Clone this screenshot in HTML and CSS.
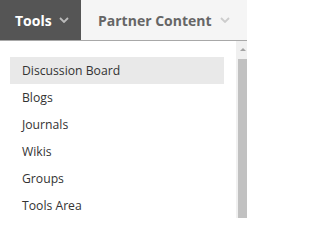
FILE: index.html
```html
<!DOCTYPE html>
<html>
<head>
<meta charset="utf-8">
<link rel="stylesheet" href="styles.css">
</head>
<body>
<div class="header">
  <div class="tab tab-active">Tools <svg class="chev" width="10" height="6" viewBox="0 0 10 6"><path d="M1 1 L5 5 L9 1" fill="none" stroke="currentColor" stroke-width="1.8"/></svg></div>
  <div class="tab tab-plain">Partner Content <svg class="chev" width="10" height="6" viewBox="0 0 10 6"><path d="M1 1 L5 5 L9 1" fill="none" stroke="currentColor" stroke-width="1.8"/></svg></div>
</div>
<div class="body">
  <ul class="menu">
    <li class="item item-hover">Discussion Board</li>
    <li class="item">Blogs</li>
    <li class="item">Journals</li>
    <li class="item">Wikis</li>
    <li class="item">Groups</li>
    <li class="item">Tools Area</li>
  </ul>
  <div class="scroll">
    <div class="arrow"></div>
    <div class="thumb"></div>
  </div>
</div>
</body>
</html>
```
FILE: styles.css
```css
html, body { margin: 0; padding: 0; }
body {
  width: 247px;
  height: 218px;
  overflow: hidden;
  background: #fff;
  font-family: "Open Sans", sans-serif;
}
.header {
  display: flex;
  height: 40px;
  background: #f5f5f5;
  border-bottom: 1px solid #a8a8a8;
}
.tab {
  display: flex;
  align-items: center;
  font-weight: 700;
  font-size: 14px;
}
.tab-active {
  width: 81px;
  box-sizing: border-box;
  padding-left: 15px;
  background: #555;
  color: #fff;
}
.tab-active .chev { color: #bbb; margin-left: 7px; }
.tab-plain {
  padding-left: 17px;
  color: #666;
}
.tab-plain .chev { color: #ccc; margin-left: 8px; }
.body {
  display: flex;
  height: 177px;
}
.menu {
  list-style: none;
  margin: 0;
  padding: 16px 0 0 10px;
  width: 214px;
  flex: none;
}
.item {
  height: 27px;
  line-height: 27px;
  padding-left: 12px;
  font-size: 12.2px;
  color: #333;
}
.item-hover { background: #e9e9e9; }
.scroll {
  margin-left: 12px;
  width: 11px;
  background: #f0f0f0;
  position: relative;
}
.arrow {
  position: absolute;
  left: 4px;
  top: 7px;
  width: 0;
  height: 0;
  border-left: 3px solid transparent;
  border-right: 3px solid transparent;
  border-bottom: 3px solid #a3a3a3;
}
.thumb {
  position: absolute;
  left: 2px;
  right: 0;
  top: 18px;
  bottom: 0;
  background: #c1c1c1;
}
```
